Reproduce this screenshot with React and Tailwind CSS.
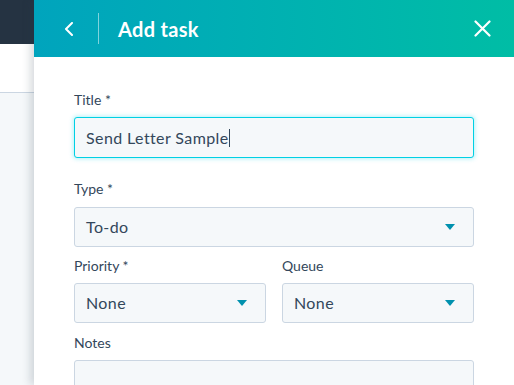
import React from 'react';

const Caret = () => (
    <svg width="10" height="6" viewBox="0 0 10 6" className="shrink-0">
        <path d="M0 0 L10 0 L5 6 Z" fill="#0091ae" />
    </svg>
);

const Label = ({ children, className = '' }) => (
    <div className={`h-5 leading-5 text-[14px] text-[#33475b] ${className}`}>{children}</div>
);

const SelectBox = ({ value }) => (
    <div className="h-10 rounded-[3px] border border-[#cbd6e2] bg-[#f5f8fa] flex items-center justify-between pl-[11px] pr-[18px]">
        <span className="text-[16px] tracking-[0.4px] text-[#33475b]">{value}</span>
        <Caret />
    </div>
);

const App = () => {
    return (
        <div className="w-[514px] h-[385px] overflow-hidden flex bg-white" style={{ fontFamily: 'Lato, "Open Sans", sans-serif' }}>
            {/* page behind the panel */}
            <div className="w-[34px] shrink-0 flex flex-col">
                <div className="h-[44px] bg-[#253342]" />
                <div className="h-[49px] bg-white border-b border-[#cbd6e2]" />
                <div className="flex-1 bg-[#f5f8fa]" />
            </div>

            {/* slide-in panel */}
            <div className="flex-1 flex flex-col bg-white relative shadow-[-4px_0_8px_rgba(45,62,80,0.18)]">
                <div className="h-[57px] shrink-0 flex items-center bg-gradient-to-r from-[#00a4bd] to-[#00bda5] text-white">
                    <div className="w-[64px] flex justify-center pl-[6px]">
                        <svg width="10" height="14" viewBox="0 0 10 14">
                            <path d="M8 1 L2 7 L8 13" fill="none" stroke="white" strokeWidth="2" strokeLinecap="round" strokeLinejoin="round" />
                        </svg>
                    </div>
                    <div className="w-px h-[31px] bg-white/50" />
                    <h1 className="ml-[19px] text-[20px] font-bold tracking-[0.3px]">Add task</h1>
                    <div className="ml-auto mr-[23px]">
                        <svg width="17" height="17" viewBox="0 0 17 17">
                            <path d="M1.5 1.5 L15.5 15.5 M15.5 1.5 L1.5 15.5" stroke="white" strokeWidth="2.2" strokeLinecap="round" />
                        </svg>
                    </div>
                </div>

                <div className="px-10 pt-[33px]">
                    <Label className="mb-[7px]">Title *</Label>
                    <div className="h-[41px] rounded-[3px] border border-[#00d0e4] bg-[#f5f8fa] shadow-[0_0_4px_1px_rgba(0,208,228,0.3)] flex items-center pl-[11px]">
                        <span className="text-[16px] tracking-[0.4px] text-[#33475b]">Send Letter Sample</span>
                        <span className="w-px h-[18px] bg-[#33475b]" />
                    </div>

                    <Label className="mt-[21px] mb-[8px]">Type *</Label>
                    <SelectBox value="To-do" />

                    <div className="grid grid-cols-2 gap-4 mt-[9px]">
                        <div>
                            <Label className="mb-[7px]">Priority *</Label>
                            <SelectBox value="None" />
                        </div>
                        <div>
                            <Label className="mb-[7px]">Queue</Label>
                            <SelectBox value="None" />
                        </div>
                    </div>

                    <Label className="mt-[10px] mb-[7px]">Notes</Label>
                    <div className="h-[80px] rounded-[3px] border border-[#cbd6e2] bg-[#f5f8fa]" />
                </div>
            </div>
        </div>
    );
};

export default App;
